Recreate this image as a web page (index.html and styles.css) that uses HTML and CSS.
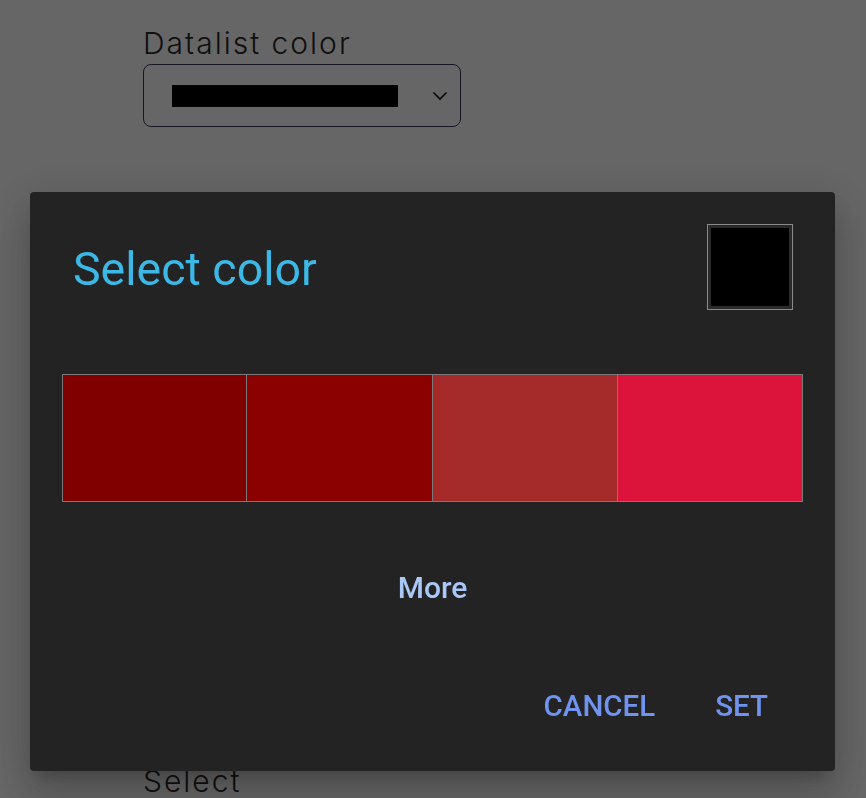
FILE: index.html
```html
<!DOCTYPE html>
<html>
<head>
<meta charset="utf-8">
<link rel="stylesheet" href="styles.css">
</head>
<body>
<div class="page">
  <div class="field">
    <label class="label">Datalist color</label>
    <div class="select">
      <span class="bar"></span>
      <svg class="chev" width="16" height="10" viewBox="0 0 16 10"><path d="M1.5 1.5 L8 8 L14.5 1.5" fill="none" stroke="#111" stroke-width="1.6"/></svg>
    </div>
  </div>
  <div class="field field-low">
    <label class="label">Select</label>
  </div>
</div>
<div class="overlay"></div>
<div class="dialog">
  <div class="head">
    <h2 class="title">Select color</h2>
    <div class="preview"><span class="preview-in"></span></div>
  </div>
  <div class="swatches">
    <span class="sw sw1"></span>
    <span class="sw sw2"></span>
    <span class="sw sw3"></span>
    <span class="sw sw4"></span>
  </div>
  <div class="more-row"><button class="more">More</button></div>
  <div class="actions">
    <button class="act">CANCEL</button>
    <button class="act">SET</button>
  </div>
</div>
</body>
</html>
```
FILE: styles.css
```css
html, body {
  margin: 0;
  padding: 0;
  background: #fff;
  height: 100%;
  overflow: hidden;
}
.page {
  padding: 23px 0 0 143px;
  font-family: Inter, "Noto Sans", sans-serif;
}
.field {
  display: flex;
  flex-direction: column;
}
.field-low {
  margin-top: 634px;
}
.label {
  font-size: 30px;
  font-weight: 300;
  letter-spacing: 2px;
  color: #2a2a2a;
  line-height: 40px;
}
.select {
  margin-top: 1px;
  border: 1px solid #3a3a5a;
  border-radius: 8px;
  display: flex;
  align-items: center;
  padding: 0 12px 0 28px;
  box-sizing: border-box;
  width: 318px;
  height: 63px;
}
.bar {
  width: 226px;
  height: 22px;
  background: #000;
}
.chev {
  margin-left: auto;
}
.overlay {
  position: fixed;
  inset: 0;
  background: rgba(0, 0, 0, 0.6);
}
.dialog {
  position: fixed;
  left: 30px;
  top: 192px;
  width: 805px;
  height: 579px;
  box-sizing: border-box;
  background: #232323;
  border-radius: 4px;
  box-shadow: 0 11px 15px -7px rgba(0,0,0,.2), 0 24px 38px 3px rgba(0,0,0,.14), 0 9px 46px 8px rgba(0,0,0,.12);
  padding: 32px 32px 0 32px;
  font-family: Roboto, "Noto Sans", sans-serif;
  display: flex;
  flex-direction: column;
}
.head {
  display: flex;
  align-items: center;
  justify-content: space-between;
  height: 86px;
}
.title {
  margin: 4px 0 0 11px;
  font-size: 46.5px;
  font-weight: 400;
  color: #3bb8e6;
  line-height: 52px;
}
.preview {
  width: 86px;
  height: 86px;
  box-sizing: border-box;
  border: 1px solid #8a8a8a;
  padding: 3px;
  margin-right: 10px;
  background: #2a2a2a;
}
.preview-in {
  display: block;
  width: 100%;
  height: 100%;
  background: #000;
}
.swatches {
  margin-top: 64px;
  display: grid;
  grid-template-columns: repeat(4, 1fr);
  height: 128px;
}
.sw {
  border: 1px solid #7a7a7a;
  margin-left: -1px;
}
.sw1 { background: #800000; margin-left: 0; }
.sw2 { background: #8b0000; }
.sw3 { background: #a52a2a; }
.sw4 { background: #dc143c; }
.more-row {
  display: flex;
  justify-content: center;
  margin-top: 68px;
}
.more, .act {
  background: none;
  border: 0;
  font-family: Roboto, "Noto Sans", sans-serif;
  font-weight: 500;
  padding: 0;
  cursor: pointer;
}
.more {
  font-size: 30px;
  color: #a9c7f7;
  line-height: 36px;
}
.actions {
  display: flex;
  justify-content: flex-end;
  gap: 60px;
  margin-top: 82px;
  padding-right: 35px;
}
.act {
  font-size: 29.5px;
  color: #6f93ee;
  line-height: 36px;
}
```
